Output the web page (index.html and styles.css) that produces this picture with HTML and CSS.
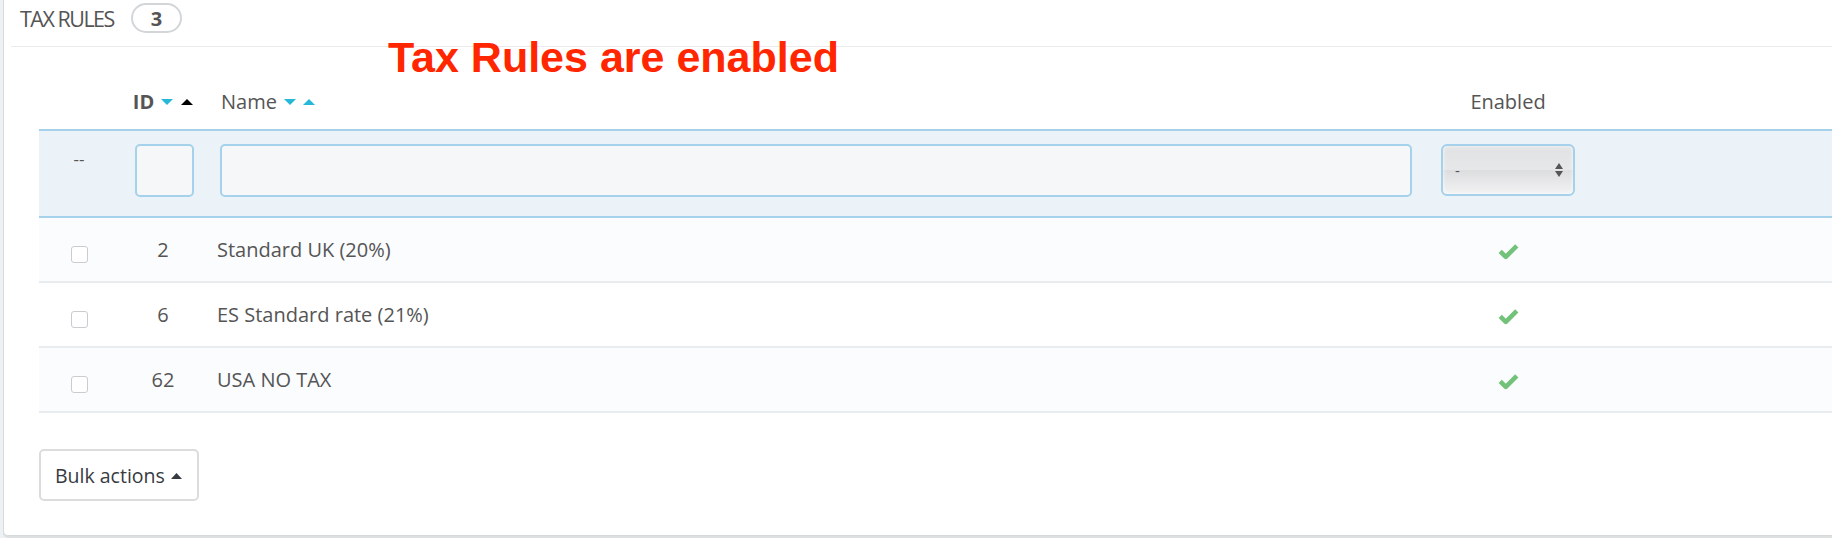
FILE: index.html
```html
<!DOCTYPE html>
<html>
<head>
<meta charset="utf-8">
<title>Tax Rules</title>
<link rel="stylesheet" href="styles.css">
</head>
<body>
<div class="panel">
  <div class="panel-heading">
    <span class="title">Tax Rules</span>
    <span class="badge">3</span>
  </div>
  <div class="note">Tax Rules are enabled</div>
  <div class="table">
    <div class="row head">
      <div class="cell c-check"></div>
      <div class="cell c-id">
        <span class="th-bold">ID</span>
        <svg class="sort" width="12" height="6" viewBox="0 0 12 6"><path d="M0 0H12L6 6Z" fill="#25b9d7"/></svg>
        <svg class="sort" width="12" height="6" viewBox="0 0 12 6"><path d="M0 6H12L6 0Z" fill="#000"/></svg>
      </div>
      <div class="cell c-name">
        <span>Name</span>
        <svg class="sort" width="12" height="6" viewBox="0 0 12 6"><path d="M0 0H12L6 6Z" fill="#25b9d7"/></svg>
        <svg class="sort" width="12" height="6" viewBox="0 0 12 6"><path d="M0 6H12L6 0Z" fill="#25b9d7"/></svg>
      </div>
      <div class="cell c-enabled">Enabled</div>
      <div class="cell c-rest"></div>
    </div>
    <div class="row filter">
      <div class="cell c-check"><span class="dashes">--</span></div>
      <div class="cell c-id"><input class="finput id-input" type="text"></div>
      <div class="cell c-name"><input class="finput name-input" type="text"></div>
      <div class="cell c-enabled">
        <div class="fselect">
          <span class="fselect-val">-</span>
          <svg width="8" height="14" viewBox="0 0 8 14"><path d="M0 6H8L4 0Z M0 8H8L4 14Z" fill="#555"/></svg>
        </div>
      </div>
      <div class="cell c-rest"></div>
    </div>
    <div class="row data odd">
      <div class="cell c-check"><span class="cb"></span></div>
      <div class="cell c-id">2</div>
      <div class="cell c-name">Standard UK (20%)</div>
      <div class="cell c-enabled"><svg class="check" width="21" height="17" viewBox="0 0 21 17"><path d="M2.2 8.4L7.8 13.8L18.8 2.8" fill="none" stroke="#72c279" stroke-width="4.6" stroke-linejoin="round"/></svg></div>
      <div class="cell c-rest"></div>
    </div>
    <div class="row data">
      <div class="cell c-check"><span class="cb"></span></div>
      <div class="cell c-id">6</div>
      <div class="cell c-name">ES Standard rate (21%)</div>
      <div class="cell c-enabled"><svg class="check" width="21" height="17" viewBox="0 0 21 17"><path d="M2.2 8.4L7.8 13.8L18.8 2.8" fill="none" stroke="#72c279" stroke-width="4.6" stroke-linejoin="round"/></svg></div>
      <div class="cell c-rest"></div>
    </div>
    <div class="row data odd">
      <div class="cell c-check"><span class="cb"></span></div>
      <div class="cell c-id">62</div>
      <div class="cell c-name">USA NO TAX</div>
      <div class="cell c-enabled"><svg class="check" width="21" height="17" viewBox="0 0 21 17"><path d="M2.2 8.4L7.8 13.8L18.8 2.8" fill="none" stroke="#72c279" stroke-width="4.6" stroke-linejoin="round"/></svg></div>
      <div class="cell c-rest"></div>
    </div>
  </div>
  <div class="panel-footer">
    <button class="bulk" type="button">Bulk actions <svg width="11" height="6" viewBox="0 0 11 6"><path d="M0 6H11L5.5 0Z" fill="#363a41"/></svg></button>
  </div>
</div>
</body>
</html>
```

FILE: styles.css
```css
html, body {
  margin: 0;
  padding: 0;
}
body {
  width: 1832px;
  height: 538px;
  overflow: hidden;
  background: #eef1f3;
  font-family: "Open Sans", "DejaVu Sans", sans-serif;
  font-size: 20px;
  color: #555;
}
.panel {
  position: relative;
  margin: 0 -20px 0 3px;
  background: #fff;
  border: 1px solid #d6dadd;
  border-top: none;
  border-radius: 0 0 5px 5px;
  box-shadow: 0 2px 0 rgba(0, 0, 0, 0.07);
  padding-left: 7px;
}
.panel-heading {
  display: flex;
  align-items: center;
  height: 36px;
  padding: 0 0 10px 9px;
  border-bottom: 1px solid #eaeaea;
}
.title {
  font-family: "Open Sans", "DejaVu Sans", sans-serif;
  font-size: 21.5px;
  text-transform: uppercase;
  color: #555;
  letter-spacing: -1.5px;
}
.badge {
  display: inline-flex;
  align-items: center;
  justify-content: center;
  box-sizing: border-box;
  width: 51px;
  height: 30px;
  margin-left: 17px;
  border: 2px solid #d3d6d9;
  border-radius: 15px;
  font-family: "Open Sans", "DejaVu Sans", sans-serif;
  font-weight: bold;
  font-size: 20px;
  color: #555;
}
.note {
  position: absolute;
  left: 384px;
  top: 36px;
  font-family: "Liberation Sans", Arial, sans-serif;
  font-weight: bold;
  font-size: 43px;
  line-height: 1;
  color: #ff2600;
  white-space: nowrap;
}
.table {
  margin-left: 28px;
}
.row {
  display: grid;
  grid-template-columns: 80px 88px 1224px 154px 1fr;
}
.cell {
  line-height: 27px;
  box-sizing: border-box;
}
.c-check, .c-id, .c-enabled {
  display: flex;
  justify-content: center;
}
.c-name {
  display: flex;
  padding-left: 12px;
}
.head {
  height: 82px;
  align-items: end;
}
.head .cell {
  padding-bottom: 14px;
  align-items: center;
}
.head .c-name {
  padding-left: 14px;
}
.th-bold {
  font-weight: bold;
}
.sort {
  display: block;
  margin-left: 7px;
}
.head .c-id .sort:last-child {
  margin-left: 8px;
}
.filter {
  background: #ebf3f9;
  border-top: 2px solid #a5d2ea;
  border-bottom: 2px solid #a5d2ea;
  padding: 13px 0 19px;
  align-items: start;
}
.dashes {
  padding-top: 1px;
  font-size: 17px;
}
.finput {
  display: block;
  box-sizing: border-box;
  height: 53px;
  margin: 0;
  border: 2px solid #a5d2ea;
  border-radius: 5px;
  background: #f5f7f9;
  font: inherit;
}
.id-input {
  width: 59px;
  margin-left: 2px;
}
.filter .c-name {
  padding-left: 13px;
  padding-right: 19px;
}
.name-input {
  width: 100%;
}
.fselect {
  box-sizing: border-box;
  width: 134px;
  height: 52px;
  border: 2px solid #a5d2ea;
  border-radius: 6px;
  background: linear-gradient(#e1e2e4, #e6e7e8 49%, #dcdddf 50%, #f2f2f3);
  box-shadow: inset 0 0 4px rgba(255, 255, 255, 0.8);
  display: flex;
  align-items: center;
  justify-content: space-between;
  padding: 0 10px 0 12px;
}
.fselect-val {
  font-size: 15px;
  color: #555;
  line-height: 1;
}
.data {
  height: 63px;
  align-items: center;
  border-bottom: 2px solid #e9ecef;
}
.data.odd {
  background: #fbfcfe;
}
.data .c-name {
  padding-left: 10px;
}
.cb {
  display: block;
  box-sizing: border-box;
  width: 17px;
  height: 17px;
  margin-top: 10px;
  border: 1px solid #c9ccd0;
  border-radius: 3px;
  background: #fff;
}
.check {
  display: block;
  margin-top: 4px;
}
.panel-footer {
  padding: 36px 0 34px 28px;
}
.bulk {
  display: flex;
  align-items: center;
  box-sizing: border-box;
  width: 160px;
  height: 52px;
  margin: 0;
  padding: 0 0 0 14px;
  border: 2px solid #dcdcdc;
  border-radius: 5px;
  background: #fff;
  font-family: "Open Sans", "DejaVu Sans", sans-serif;
  font-size: 19.5px;
  color: #363a41;
}
.bulk svg {
  display: block;
  margin-left: 6px;
  margin-top: 2px;
}
```
